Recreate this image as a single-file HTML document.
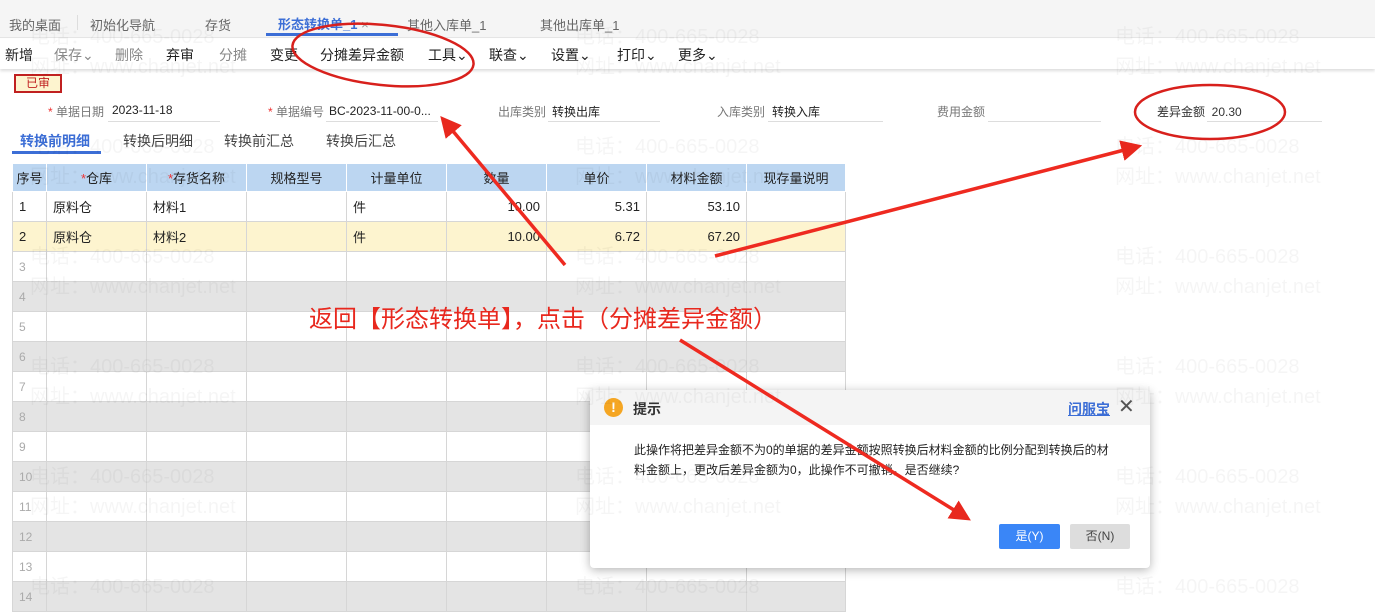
<!DOCTYPE html>
<html><head><meta charset="utf-8"><style>
*{margin:0;padding:0;box-sizing:border-box}
body{width:1375px;height:605px;overflow:hidden;background:#fff;font-family:"Liberation Sans","Noto Sans CJK SC",sans-serif;font-size:13px;color:#222;position:relative}
.a{position:absolute;white-space:nowrap}
.wm{position:absolute;color:#000;opacity:.035;font-size:20px;white-space:nowrap;z-index:50}
table{position:absolute;left:12px;top:163px;border-collapse:collapse;width:834px}
td{border:1px solid #d6d6d6;height:30px;padding:0 6px;font-size:13px}
th{height:28px;background:#bcd6f1;font-weight:normal;border:1px solid #fff;font-size:13px}
tr.g td{background:#e4e4e4}
tr.y td{background:#fdf4cf}
td.n{color:#aaa;font-size:12px}
.r{text-align:right}
.lbl{color:#777;font-size:12px}
.line{position:absolute;height:1px;background:#ddd}
.star{color:#e33}
</style></head><body>
<div class="a" style="left:0;top:0;width:1375px;height:38px;background:#f5f5f5;border-bottom:1px solid #e5e5e5"></div>
<div class="a" style="left:9px;top:15px;color:#666">我的桌面</div>
<div class="a" style="left:77px;top:15px;width:1px;height:15px;background:#ddd"></div>
<div class="a" style="left:90px;top:15px;color:#666">初始化导航</div>
<div class="a" style="left:205px;top:15px;color:#666">存货</div>
<div class="a" style="left:278px;top:14px;color:#3c6ed6;font-weight:bold">形态转换单_1 <span style="color:#999;font-weight:normal">×</span></div>
<div class="a" style="left:266px;top:33px;width:132px;height:3px;background:#3c6ed6"></div>
<div class="a" style="left:407px;top:15px;color:#666">其他入库单_1</div>
<div class="a" style="left:540px;top:15px;color:#666">其他出库单_1</div>
<div class="a" style="left:0;top:39px;width:1375px;height:30px;background:#fff;box-shadow:0 2px 3px #ddd"></div>
<div class="a" style="left:5px;top:45px;font-size:14px">新增</div>
<div class="a" style="left:54px;top:45px;font-size:14px;color:#888">保存⌄</div>
<div class="a" style="left:115px;top:45px;font-size:14px;color:#888">删除</div>
<div class="a" style="left:166px;top:45px;font-size:14px">弃审</div>
<div class="a" style="left:219px;top:45px;font-size:14px;color:#888">分摊</div>
<div class="a" style="left:270px;top:45px;font-size:14px">变更</div>
<div class="a" style="left:320px;top:45px;font-size:14px">分摊差异金额</div>
<div class="a" style="left:428px;top:45px;font-size:14px">工具⌄</div>
<div class="a" style="left:489px;top:45px;font-size:14px">联查⌄</div>
<div class="a" style="left:551px;top:45px;font-size:14px">设置⌄</div>
<div class="a" style="left:617px;top:45px;font-size:14px">打印⌄</div>
<div class="a" style="left:678px;top:45px;font-size:14px">更多⌄</div>
<div class="a" style="left:14px;top:74px;width:48px;height:19px;border:2px solid #c02020;background:#fdf4cf;color:#c02020;font-size:12px;text-align:center;line-height:15px">已审</div>
<div class="a lbl" style="left:48px;top:103px"><span class="star">*</span> 单据日期</div>
<div class="a" style="left:112px;top:103px;font-size:12px">2023-11-18</div>
<div class="line" style="left:108px;top:121px;width:112px"></div>
<div class="a lbl" style="left:268px;top:103px"><span class="star">*</span> 单据编号</div>
<div class="a" style="left:329px;top:104px;font-size:12px">BC-2023-11-00-0...</div>
<div class="line" style="left:326px;top:121px;width:112px"></div>
<div class="a lbl" style="left:498px;top:103px">出库类别</div>
<div class="a" style="left:552px;top:103px;font-size:12px">转换出库</div>
<div class="line" style="left:548px;top:121px;width:112px"></div>
<div class="a lbl" style="left:717px;top:103px">入库类别</div>
<div class="a" style="left:772px;top:103px;font-size:12px">转换入库</div>
<div class="line" style="left:768px;top:121px;width:115px"></div>
<div class="a lbl" style="left:937px;top:103px">费用金额</div>
<div class="line" style="left:988px;top:121px;width:113px"></div>
<div class="a" style="left:1157px;top:103px;font-size:12px;color:#333">差异金额&nbsp; 20.30</div>
<div class="line" style="left:1207px;top:121px;width:115px"></div>
<div class="a" style="left:20px;top:131px;font-size:14px;color:#3c6ed6;font-weight:bold">转换前明细</div>
<div class="a" style="left:12px;top:151px;width:89px;height:3px;background:#3c6ed6"></div>
<div class="a" style="left:123px;top:131px;font-size:14px;color:#444">转换后明细</div>
<div class="a" style="left:224px;top:131px;font-size:14px;color:#444">转换前汇总</div>
<div class="a" style="left:326px;top:131px;font-size:14px;color:#444">转换后汇总</div>
<table>
<tr><th style="width:34px">序号</th><th style="width:100px"><span class="star">*</span>仓库</th><th style="width:100px"><span class="star">*</span>存货名称</th><th style="width:100px">规格型号</th><th style="width:100px">计量单位</th><th style="width:100px">数量</th><th style="width:100px">单价</th><th style="width:100px">材料金额</th><th>现存量说明</th></tr>
<tr><td>1</td><td>原料仓</td><td>材料1</td><td></td><td>件</td><td class="r">10.00</td><td class="r">5.31</td><td class="r">53.10</td><td></td></tr>
<tr class="y"><td>2</td><td>原料仓</td><td>材料2</td><td></td><td>件</td><td class="r">10.00</td><td class="r">6.72</td><td class="r">67.20</td><td></td></tr>
<tr><td class="n">3</td><td></td><td></td><td></td><td></td><td></td><td></td><td></td><td></td></tr>
<tr class="g"><td class="n">4</td><td></td><td></td><td></td><td></td><td></td><td></td><td></td><td></td></tr>
<tr><td class="n">5</td><td></td><td></td><td></td><td></td><td></td><td></td><td></td><td></td></tr>
<tr class="g"><td class="n">6</td><td></td><td></td><td></td><td></td><td></td><td></td><td></td><td></td></tr>
<tr><td class="n">7</td><td></td><td></td><td></td><td></td><td></td><td></td><td></td><td></td></tr>
<tr class="g"><td class="n">8</td><td></td><td></td><td></td><td></td><td></td><td></td><td></td><td></td></tr>
<tr><td class="n">9</td><td></td><td></td><td></td><td></td><td></td><td></td><td></td><td></td></tr>
<tr class="g"><td class="n">10</td><td></td><td></td><td></td><td></td><td></td><td></td><td></td><td></td></tr>
<tr><td class="n">11</td><td></td><td></td><td></td><td></td><td></td><td></td><td></td><td></td></tr>
<tr class="g"><td class="n">12</td><td></td><td></td><td></td><td></td><td></td><td></td><td></td><td></td></tr>
<tr><td class="n">13</td><td></td><td></td><td></td><td></td><td></td><td></td><td></td><td></td></tr>
<tr class="g"><td class="n">14</td><td></td><td></td><td></td><td></td><td></td><td></td><td></td><td></td></tr>
</table>
<div class="a" style="left:590px;top:390px;width:560px;height:178px;background:#fff;border-radius:4px;box-shadow:0 2px 10px rgba(0,0,0,.3);z-index:5">
 <div style="height:35px;background:#f4f4f4;border-radius:4px 4px 0 0;position:relative">
  <div class="a" style="left:14px;top:8px;width:19px;height:19px;border-radius:50%;background:#f5a623;color:#fff;font-weight:bold;text-align:center;line-height:19px;font-size:14px">!</div>
  <div class="a" style="left:43px;top:9px;font-size:14px;font-weight:bold;color:#333">提示</div>
  <div class="a" style="left:478px;top:9px;font-size:14px;color:#3c6ed6;text-decoration:underline;font-weight:bold">问服宝</div>
  <div class="a" style="left:528px;top:4px;font-size:20px;color:#555">✕</div>
 </div>
 <div class="a" style="left:44px;top:50px;width:480px;font-size:12px;line-height:20px;white-space:normal;color:#222">此操作将把差异金额不为0的单据的差异金额按照转换后材料金额的比例分配到转换后的材料金额上，更改后差异金额为0，此操作不可撤销，是否继续?</div>
 <div class="a" style="left:409px;top:134px;width:61px;height:25px;background:#3a86f7;color:#fff;border-radius:2px;text-align:center;line-height:25px;font-size:12px">是(Y)</div>
 <div class="a" style="left:480px;top:134px;width:60px;height:25px;background:#ddd;color:#444;border-radius:2px;text-align:center;line-height:25px;font-size:12px">否(N)</div>
</div>
<div class="wm" style="left:30px;top:20px">电话：400-665-0028</div><div class="wm" style="left:575px;top:20px">电话：400-665-0028</div><div class="wm" style="left:1115px;top:20px">电话：400-665-0028</div>
<div class="wm" style="left:30px;top:50px">网址：www.chanjet.net</div><div class="wm" style="left:575px;top:50px">网址：www.chanjet.net</div><div class="wm" style="left:1115px;top:50px">网址：www.chanjet.net</div>
<div class="wm" style="left:30px;top:130px">电话：400-665-0028</div><div class="wm" style="left:575px;top:130px">电话：400-665-0028</div><div class="wm" style="left:1115px;top:130px">电话：400-665-0028</div>
<div class="wm" style="left:30px;top:160px">网址：www.chanjet.net</div><div class="wm" style="left:575px;top:160px">网址：www.chanjet.net</div><div class="wm" style="left:1115px;top:160px">网址：www.chanjet.net</div>
<div class="wm" style="left:30px;top:240px">电话：400-665-0028</div><div class="wm" style="left:575px;top:240px">电话：400-665-0028</div><div class="wm" style="left:1115px;top:240px">电话：400-665-0028</div>
<div class="wm" style="left:30px;top:270px">网址：www.chanjet.net</div><div class="wm" style="left:575px;top:270px">网址：www.chanjet.net</div><div class="wm" style="left:1115px;top:270px">网址：www.chanjet.net</div>
<div class="wm" style="left:30px;top:350px">电话：400-665-0028</div><div class="wm" style="left:575px;top:350px">电话：400-665-0028</div><div class="wm" style="left:1115px;top:350px">电话：400-665-0028</div>
<div class="wm" style="left:30px;top:380px">网址：www.chanjet.net</div><div class="wm" style="left:575px;top:380px">网址：www.chanjet.net</div><div class="wm" style="left:1115px;top:380px">网址：www.chanjet.net</div>
<div class="wm" style="left:30px;top:460px">电话：400-665-0028</div><div class="wm" style="left:575px;top:460px">电话：400-665-0028</div><div class="wm" style="left:1115px;top:460px">电话：400-665-0028</div>
<div class="wm" style="left:30px;top:490px">网址：www.chanjet.net</div><div class="wm" style="left:575px;top:490px">网址：www.chanjet.net</div><div class="wm" style="left:1115px;top:490px">网址：www.chanjet.net</div>
<div class="wm" style="left:30px;top:570px">电话：400-665-0028</div><div class="wm" style="left:575px;top:570px">电话：400-665-0028</div><div class="wm" style="left:1115px;top:570px">电话：400-665-0028</div>
<div class="a" style="left:309px;top:299px;font-size:24px;color:#e8281e;z-index:60">返回【形态转换单】，点击（分摊差异金额）</div>
<svg class="a" style="left:0;top:0;z-index:60" width="1375" height="605">
<defs><marker id="m" markerWidth="6" markerHeight="6" refX="3" refY="3" orient="auto" markerUnits="strokeWidth"><path d="M0,0 L6,3 L0,6 Z" fill="#e8281e"/></marker></defs>
<g fill="none" stroke="#d8201c" stroke-width="2.5">
<ellipse cx="383" cy="55" rx="91" ry="30" transform="rotate(6 383 55)"/>
<ellipse cx="1210" cy="112" rx="75" ry="27"/>
</g>
<g stroke="#ee2a20" stroke-width="3.5">
<line x1="565" y1="265" x2="447" y2="124" marker-end="url(#m)"/>
<line x1="715" y1="256" x2="1132" y2="148" marker-end="url(#m)"/>
<line x1="680" y1="340" x2="962" y2="515" marker-end="url(#m)"/>
</g>
</svg>
</body></html>
